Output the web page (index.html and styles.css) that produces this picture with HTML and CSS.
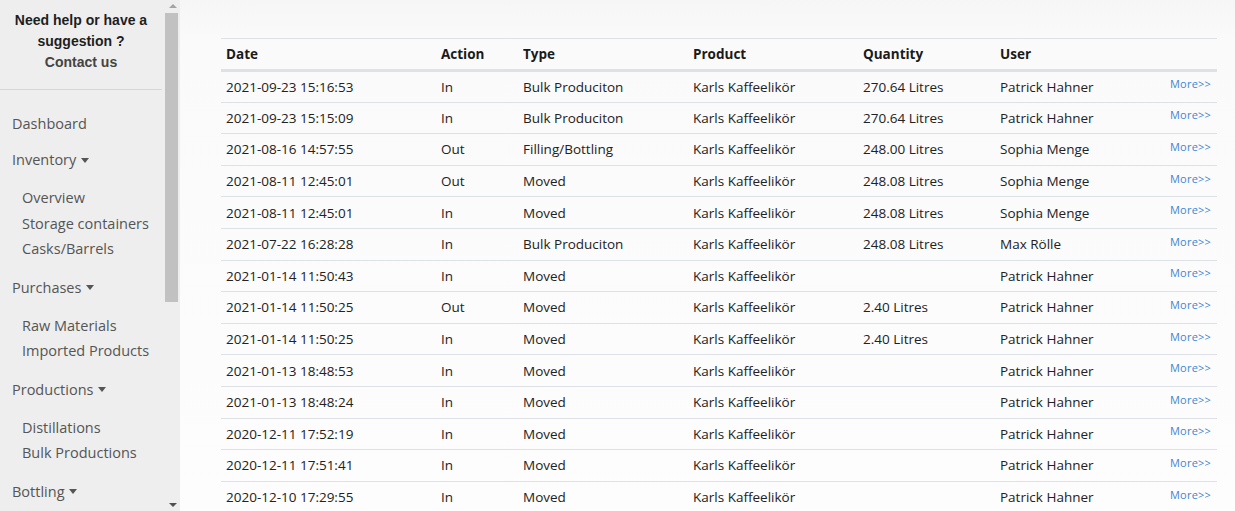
FILE: index.html
```html
<!DOCTYPE html>
<html>
<head>
<meta charset="utf-8">
<link rel="stylesheet" href="styles.css">
</head>
<body>
<div class="app">
  <aside class="sidebar">
    <div class="side-content">
      <div class="help">
        <div class="help-q">Need help or have a<br>suggestion ?</div>
        <div class="help-c">Contact us</div>
      </div>
      <nav class="nav">
        <div class="nav-top">Dashboard</div>
        <div class="nav-top">Inventory <span class="caret"></span></div>
        <div class="nav-sub">
          <div>Overview</div>
          <div>Storage containers</div>
          <div>Casks/Barrels</div>
        </div>
        <div class="nav-top">Purchases <span class="caret"></span></div>
        <div class="nav-sub">
          <div>Raw Materials</div>
          <div>Imported Products</div>
        </div>
        <div class="nav-top">Productions <span class="caret"></span></div>
        <div class="nav-sub">
          <div>Distillations</div>
          <div>Bulk Productions</div>
        </div>
        <div class="nav-top">Bottling <span class="caret"></span></div>
      </nav>
    </div>
    <div class="scrollbar">
      <div class="sb-arrow sb-up"></div>
      <div class="sb-track"><div class="sb-thumb"></div></div>
      <div class="sb-arrow sb-down"></div>
    </div>
  </aside>
  <main class="main">
    <table class="log">
      <thead>
        <tr><th class="c-date">Date</th><th class="c-act">Action</th><th class="c-type">Type</th><th class="c-prod">Product</th><th class="c-qty">Quantity</th><th class="c-user">User</th><th class="c-more"></th></tr>
      </thead>
      <tbody>
        <tr><td>2021-09-23 15:16:53</td><td>In</td><td>Bulk Produciton</td><td>Karls Kaffeelikör</td><td>270.64 Litres</td><td>Patrick Hahner</td><td class="more"><a>More&gt;&gt;</a></td></tr>
        <tr><td>2021-09-23 15:15:09</td><td>In</td><td>Bulk Produciton</td><td>Karls Kaffeelikör</td><td>270.64 Litres</td><td>Patrick Hahner</td><td class="more"><a>More&gt;&gt;</a></td></tr>
        <tr><td>2021-08-16 14:57:55</td><td>Out</td><td>Filling/Bottling</td><td>Karls Kaffeelikör</td><td>248.00 Litres</td><td>Sophia Menge</td><td class="more"><a>More&gt;&gt;</a></td></tr>
        <tr><td>2021-08-11 12:45:01</td><td>Out</td><td>Moved</td><td>Karls Kaffeelikör</td><td>248.08 Litres</td><td>Sophia Menge</td><td class="more"><a>More&gt;&gt;</a></td></tr>
        <tr><td>2021-08-11 12:45:01</td><td>In</td><td>Moved</td><td>Karls Kaffeelikör</td><td>248.08 Litres</td><td>Sophia Menge</td><td class="more"><a>More&gt;&gt;</a></td></tr>
        <tr><td>2021-07-22 16:28:28</td><td>In</td><td>Bulk Produciton</td><td>Karls Kaffeelikör</td><td>248.08 Litres</td><td>Max Rölle</td><td class="more"><a>More&gt;&gt;</a></td></tr>
        <tr><td>2021-01-14 11:50:43</td><td>In</td><td>Moved</td><td>Karls Kaffeelikör</td><td></td><td>Patrick Hahner</td><td class="more"><a>More&gt;&gt;</a></td></tr>
        <tr><td>2021-01-14 11:50:25</td><td>Out</td><td>Moved</td><td>Karls Kaffeelikör</td><td>2.40 Litres</td><td>Patrick Hahner</td><td class="more"><a>More&gt;&gt;</a></td></tr>
        <tr><td>2021-01-14 11:50:25</td><td>In</td><td>Moved</td><td>Karls Kaffeelikör</td><td>2.40 Litres</td><td>Patrick Hahner</td><td class="more"><a>More&gt;&gt;</a></td></tr>
        <tr><td>2021-01-13 18:48:53</td><td>In</td><td>Moved</td><td>Karls Kaffeelikör</td><td></td><td>Patrick Hahner</td><td class="more"><a>More&gt;&gt;</a></td></tr>
        <tr><td>2021-01-13 18:48:24</td><td>In</td><td>Moved</td><td>Karls Kaffeelikör</td><td></td><td>Patrick Hahner</td><td class="more"><a>More&gt;&gt;</a></td></tr>
        <tr><td>2020-12-11 17:52:19</td><td>In</td><td>Moved</td><td>Karls Kaffeelikör</td><td></td><td>Patrick Hahner</td><td class="more"><a>More&gt;&gt;</a></td></tr>
        <tr><td>2020-12-11 17:51:41</td><td>In</td><td>Moved</td><td>Karls Kaffeelikör</td><td></td><td>Patrick Hahner</td><td class="more"><a>More&gt;&gt;</a></td></tr>
        <tr><td>2020-12-10 17:29:55</td><td>In</td><td>Moved</td><td>Karls Kaffeelikör</td><td></td><td>Patrick Hahner</td><td class="more"><a>More&gt;&gt;</a></td></tr>
      </tbody>
    </table>
  </main>
</div>
</body>
</html>
```
FILE: styles.css
```css
html, body {
  margin: 0;
  padding: 0;
  height: 100%;
  overflow: hidden;
}
body {
  font-family: "Open Sans", "Noto Sans", sans-serif;
  color: #222;
  background: #fafafa;
}
.app {
  display: flex;
  height: 511px;
}
.sidebar {
  display: flex;
  width: 180px;
  flex: 0 0 180px;
  background: #eeeeee;
  overflow: hidden;
}
.side-content {
  width: 165px;
  flex: 0 0 165px;
}
.help {
  font-family: "Liberation Sans", Arial, sans-serif;
  font-weight: bold;
  font-size: 14px;
  line-height: 21px;
  text-align: center;
  padding: 10px 0 16px;
  border-bottom: 1px solid #d6d6d6;
  margin-right: 3px;
}
.help-q { color: #1e1e1e; }
.help-c { color: #444; }
.nav {
  font-size: 14.5px;
  color: #555;
  padding-top: 16px;
}
.nav-top {
  padding-left: 12px;
  height: 36px;
  line-height: 36px;
}
.caret {
  display: inline-block;
  width: 0;
  height: 0;
  border-left: 4px solid transparent;
  border-right: 4px solid transparent;
  border-top: 5px solid #555;
  vertical-align: middle;
  margin-left: 1px;
  position: relative;
  top: -1px;
}
.nav-sub {
  padding: 7px 0 8px 22px;
}
.nav-sub div {
  height: 25.5px;
  line-height: 25.5px;
}
.scrollbar {
  width: 15px;
  flex: 0 0 15px;
  display: flex;
  flex-direction: column;
  background: #eeeeee;
}
.sb-arrow {
  height: 12px;
  flex: 0 0 12px;
  display: flex;
  align-items: center;
  justify-content: center;
}
.sb-up::before {
  content: "";
  border-left: 4px solid transparent;
  border-right: 4px solid transparent;
  border-bottom: 4px solid #a3a3a3;
}
.sb-down::before {
  content: "";
  border-left: 4px solid transparent;
  border-right: 4px solid transparent;
  border-top: 4px solid #505050;
}
.sb-track {
  flex: 1;
  padding: 1px 1px 0 0;
}
.sb-thumb {
  height: 289px;
  width: 13px;
  background: #c1c1c1;
}
.main {
  flex: 1;
  padding: 38px 18px 0 41px;
  background: linear-gradient(#f6f6f6, #fafafa 40px, #fdfdfd);
}
.log {
  width: 996px;
  table-layout: fixed;
  border-collapse: collapse;
  font-size: 13.5px;
  line-height: 18px;
  color: #222;
}
.log th {
  text-align: left;
  font-weight: bold;
  height: 32px;
  padding: 0 5px;
  border-top: 1px solid #dee2e6;
  border-bottom: 3px solid #dee2e6;
  color: #1a1a1a;
  box-sizing: border-box;
}
.log td {
  height: 31.6px;
  padding: 0 5px;
  border-bottom: 1px solid #dee2e6;
  white-space: nowrap;
  box-sizing: border-box;
}
.c-date { width: 215px; }
.c-act { width: 82px; }
.c-type { width: 170px; }
.c-prod { width: 170px; }
.c-qty { width: 137px; }
.c-user { width: 145px; }
.c-more { width: 77px; }
.log td.more {
  text-align: right;
  padding-right: 6px;
}
.more a {
  position: relative;
  top: -3px;
  font-size: 11px;
  color: #3f86d6;
  letter-spacing: 0.2px;
}
```
